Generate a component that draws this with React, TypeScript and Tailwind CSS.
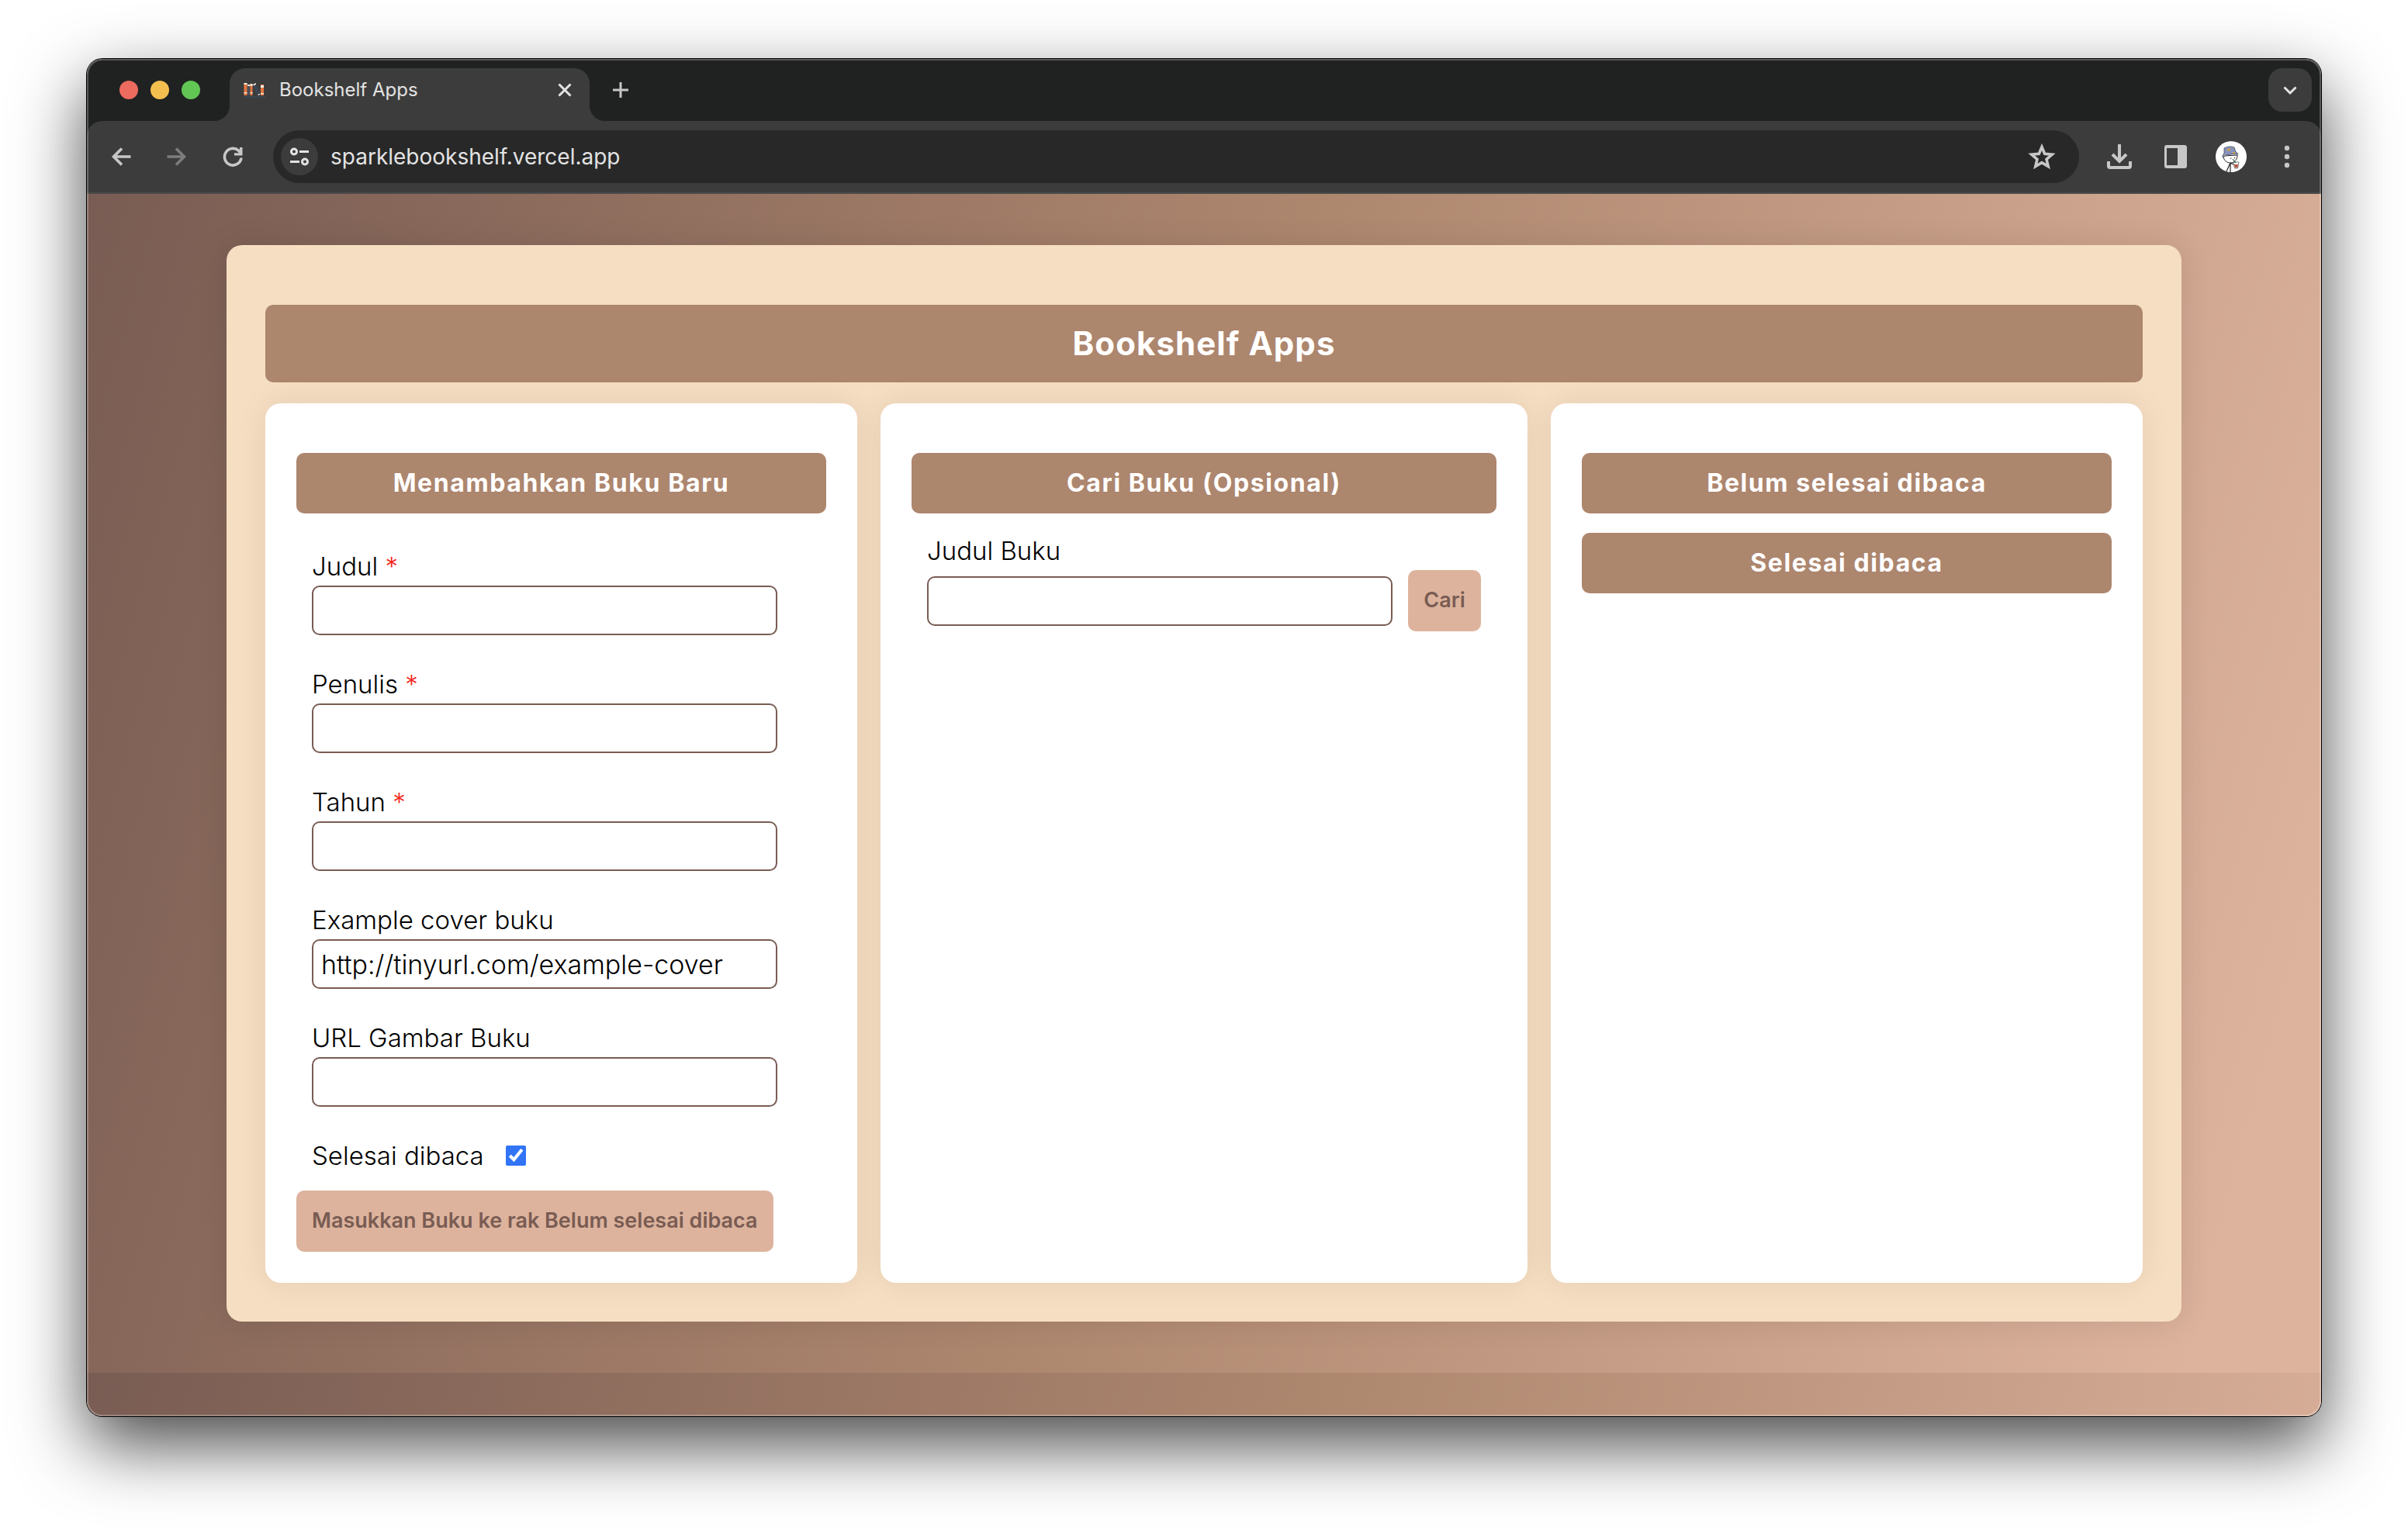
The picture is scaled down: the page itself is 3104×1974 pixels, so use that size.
import type { ReactNode } from "react";

function Heading({ children }: { children: ReactNode }) {
  return (
    <h2 className="flex h-[78px] items-center justify-center rounded-[10px] bg-[#ad866e] text-[32px] leading-[48px] font-bold tracking-wider text-white">
      {children}
    </h2>
  );
}

function Card({ children, className }: { children: ReactNode; className: string }) {
  return (
    <section className={`rounded-[20px] bg-white px-10 pt-16 pb-10 shadow-[0_0_40px_rgba(0,0,0,0.08)] ${className}`}>
      {children}
    </section>
  );
}

const inputClass =
  "block h-16 w-full max-w-[600px] rounded-[10px] border-2 border-[#795c53] bg-white px-[10px] text-[34px] leading-[48px] font-light text-black";

const labelClass = "text-[33px] leading-[46px] font-light";

function Field({ id, label, required, value }: { id: string; label: string; required?: boolean; value?: string }) {
  return (
    <div>
      <label htmlFor={id} className={`block pb-0.5 ${labelClass}`}>
        {label} {required && <span className="text-[#f5261b]">*</span>}
      </label>
      <input id={id} type="text" defaultValue={value} className={inputClass} />
    </div>
  );
}

const buttonClass = "h-[79px] rounded-[10px] bg-[#ddb39d] text-[27px] font-semibold text-[#795c53]";

function TabStrip() {
  return (
    <div className="flex h-20 items-center bg-[#202221] pr-3">
      <div className="flex w-[184px] shrink-0 gap-4 pl-[42px]">
        <span className="size-6 rounded-full bg-[#ed6a5f]" />
        <span className="size-6 rounded-full bg-[#f5bf4f]" />
        <span className="size-6 rounded-full bg-[#62c655]" />
      </div>
      <div className="relative flex h-[68px] w-[464px] items-center self-end rounded-t-[20px] bg-[#3c3c3c] pr-5 pb-3 pl-[18px]">
        <svg className="absolute bottom-0 -left-5 size-5" viewBox="0 0 20 20" fill="#3c3c3c">
          <path d="M20 0v20H0A20 20 0 0 0 20 0Z" />
        </svg>
        <svg className="absolute -right-5 bottom-0 size-5" viewBox="0 0 20 20" fill="#3c3c3c">
          <path d="M0 0v20h20A20 20 0 0 1 0 0Z" />
        </svg>
        <svg className="h-[22px] w-7" viewBox="0 0 28 22">
          <path fill="#e8763f" d="M.5 2h4v16h-4zM8.500 3h3v15h-3zM22 4h4v14h-4z" />
          <path fill="#4a4f5a" d="M5 6h3v12H5z" />
          <path fill="#f4ede4" d="M.5 2h4v2h-4zM5 4h3v2H5zM8.500 3h3v3h-3zM.5 14h4v1.500h-4zM8.500 14h3v1.500h-3zM22 5h4v3h-4zM22 15h4v1.500h-4zM12 4l4-2v2l-3 1.500zM18 16.500l3-1v1.500l-2 1z" />
          <path fill="#3b4657" d="M12.500 6l3.500-1.500 5 11-3 1.500zM0 19h28v2H0z" />
        </svg>
        <span className="ml-[18px] flex-1 text-[24px] leading-8 text-[#e3e3e3]">Bookshelf Apps</span>
        <button aria-label="Close tab" className="flex size-6 items-center justify-center">
          <svg className="size-6" viewBox="0 0 24 24" fill="none" stroke="#e3e3e3" strokeWidth="3">
            <path d="M4.500 4.500l15 15M19.500 4.500l-15 15" />
          </svg>
        </button>
      </div>
      <button aria-label="New tab" className="ml-7">
        <svg className="size-6" viewBox="0 0 24 24" fill="none" stroke="#c7c7c7" strokeWidth="3">
          <path d="M12 2v20M2 12h20" />
        </svg>
      </button>
      <button aria-label="Search tabs" className="ml-auto flex size-14 items-center justify-center rounded-[18px] bg-[#3c3c3c]">
        <svg className="size-6" viewBox="0 0 24 24" fill="none" stroke="#e3e3e3" strokeWidth="3">
          <path d="M4.500 8.500l7.500 7.500 7.500-7.500" />
        </svg>
      </button>
    </div>
  );
}

function Toolbar() {
  return (
    <div className="bg-[#202221]">
      <div className="flex h-[94px] items-center rounded-t-[20px] border-b-2 border-[#4a4a4a] bg-[#3c3c3c] pr-6 pl-7">
        <button aria-label="Back">
          <svg className="size-8" viewBox="0 0 32 32" fill="none" stroke="#c7c7c7" strokeWidth="3.600">
            <path d="M28.500 16H6.500M17 5.500L6.500 16 17 26.500" />
          </svg>
        </button>
        <button aria-label="Forward" className="ml-10">
          <svg className="size-8" viewBox="0 0 32 32" fill="none" stroke="#7c7c7c" strokeWidth="3.600">
            <path d="M3.500 16h22M15 5.500L25.500 16 15 26.500" />
          </svg>
        </button>
        <button aria-label="Reload" className="ml-10">
          <svg className="size-8" viewBox="0 0 32 32" fill="none" stroke="#c7c7c7" strokeWidth="3.600">
            <path d="M27 17.500A10.800 10.800 0 1 1 23.500 8.200L27 11.700" />
            <path fill="#c7c7c7" stroke="none" d="M28.500 4v10.500H18V11.200h7V4z" />
          </svg>
        </button>
        <div className="ml-9 flex h-[68px] flex-1 items-center rounded-full bg-[#282828] pr-[30px] pl-[10px]">
          <button aria-label="Site information" className="flex size-12 items-center justify-center rounded-full bg-[#3c3c3c]">
            <svg className="size-7" viewBox="0 0 28 28" fill="none" stroke="#e3e3e3" strokeWidth="3">
              <circle cx="7" cy="7.500" r="3.500" />
              <path d="M14 7.500h12M2 20.500h12" />
              <circle cx="21" cy="20.500" r="3.500" />
            </svg>
          </button>
          <input
            aria-label="Address"
            defaultValue="sparklebookshelf.vercel.app"
            className="ml-4 min-w-0 flex-1 bg-transparent text-[28px] leading-10 text-[#e3e3e3]"
          />
          <button aria-label="Bookmark this page">
            <svg className="size-9" viewBox="0 0 36 36" fill="none" stroke="#c7c7c7" strokeWidth="3.600">
              <path d="M18 5.500l3.700 8.800 9.500.8-7.200 6.200 2.200 9.300-8.200-4.900-8.200 4.900L12 21.300l-7.200-6.200 9.500-.8z" />
            </svg>
          </button>
        </div>
        <button aria-label="Downloads" className="ml-9">
          <svg className="size-8" viewBox="0 0 32 32" fill="none" stroke="#c7c7c7" strokeWidth="4">
            <path d="M16 0v21M7 13l9 9 9-9" />
            <path d="M2 22v6a2 2 0 0 0 2 2h24a2 2 0 0 0 2-2v-6" />
          </svg>
        </button>
        <button aria-label="Side panel" className="ml-10">
          <svg className="size-8" viewBox="0 0 32 32">
            <path fill="#c7c7c7" fillRule="evenodd" d="M5 1h23a3 3 0 0 1 3 3v24a3 3 0 0 1-3 3H5a3 3 0 0 1-3-3V4a3 3 0 0 1 3-3Zm0 4v22h14V5Z" />
          </svg>
        </button>
        <button aria-label="Profile" className="ml-9">
          <svg className="size-10" viewBox="0 0 40 40">
            <circle cx="20" cy="20" r="20" fill="#fff" />
            <path fill="#fff" stroke="#222" strokeWidth="1" d="M10 19c0 6 5 9 9 9s9-3 9-10z" />
            <path fill="#8492bd" stroke="#454b62" strokeWidth=".8" d="M11 9c4-2 9-3 13-1l2 6c2 1 3 2 3 3-7-1-14 0-20 4 0-2 0-4 2-5z" />
            <path fill="#c9a04a" d="M15 10l4-1v3l-4 1zM22 14h3v2h-3zM10 18l3-1-1 2zM21 8l2 1-1 1z" />
            <path fill="none" stroke="#222" strokeWidth="1.200" d="M19 28l-5 11M19 29v11M19 28l4 2" />
            <path fill="#fff" stroke="#555" strokeWidth=".8" d="M23 27h7l-1.500 8h-4z" />
            <path fill="#b5543f" d="M24 30h5l-.8 4h-3.400z" />
            <path stroke="#2f5f4a" strokeWidth="1.200" d="M22 23l4 5" />
            <path fill="#222" d="M19 21.500h1.200v1.200H19zM24 21h1.200v1.200H24z" />
          </svg>
        </button>
        <button aria-label="Menu" className="ml-8">
          <svg className="size-10" viewBox="0 0 40 40" fill="#c7c7c7">
            <circle cx="20" cy="9" r="3.200" />
            <circle cx="20" cy="20" r="3.200" />
            <circle cx="20" cy="31" r="3.200" />
          </svg>
        </button>
      </div>
    </div>
  );
}

export default function App() {
  return (
    <div className="flex min-h-screen flex-col bg-white px-28 pt-[76px] pb-[148px] font-[Inter,sans-serif] text-black">
      <div className="relative flex flex-1 flex-col rounded-[20px] shadow-[0_0_0_1px_#000,0_36px_90px_rgba(0,0,0,0.72)]">
        <div className="flex flex-1 flex-col overflow-hidden rounded-[20px]">
          <TabStrip />
          <Toolbar />
          <main className="flex-1 bg-[linear-gradient(105deg,#795c53,#ad866e_48%,#ddb39d_95%)] bg-[length:100%_1520px] px-[180px] pt-[66px]">
            <div className="rounded-[20px] bg-[#f6dec2] px-[50px] pt-[77px] pb-[50px] shadow-[0_0_40px_rgba(0,0,0,0.1)]">
              <h1 className="flex h-[100px] items-center justify-center rounded-[10px] bg-[#ad866e] text-[42px] leading-[60px] font-bold tracking-wide text-white">
                Bookshelf Apps
              </h1>
              <div className="mt-[27px] flex gap-[30px]">
                <Card className="min-w-0 flex-1">
                  <Heading>Menambahkan Buku Baru</Heading>
                  <form>
                    <div className="mt-[45px] flex flex-col gap-10 px-5">
                      <Field id="title" label="Judul" required />
                      <Field id="author" label="Penulis" required />
                      <Field id="year" label="Tahun" required />
                      <Field id="example" label="Example cover buku" value="http://tinyurl.com/example-cover" />
                      <Field id="cover" label="URL Gambar Buku" />
                      <div className="flex items-center gap-7 pb-0.5">
                        <label htmlFor="done" className={labelClass}>
                          Selesai dibaca
                        </label>
                        <input id="done" type="checkbox" defaultChecked className="size-[26px] accent-[#3174f6]" />
                      </div>
                    </div>
                    <button type="button" className={`mt-5 px-5 ${buttonClass}`}>
                      Masukkan Buku ke rak Belum selesai dibaca
                    </button>
                  </form>
                </Card>
                <Card className="w-[834px]">
                  <Heading>Cari Buku (Opsional)</Heading>
                  <form className="mt-[25px] px-5">
                    <label htmlFor="search" className={`block pb-0.5 ${labelClass}`}>
                      Judul Buku
                    </label>
                    <div className="flex items-center gap-5">
                      <input id="search" type="text" className={inputClass} />
                      <button type="button" className={`w-[94px] shrink-0 ${buttonClass}`}>
                        Cari
                      </button>
                    </div>
                  </form>
                </Card>
                <Card className="flex min-w-0 flex-1 flex-col gap-[25px]">
                  <Heading>Belum selesai dibaca</Heading>
                  <Heading>Selesai dibaca</Heading>
                </Card>
              </div>
            </div>
          </main>
        </div>
        <div className="pointer-events-none absolute inset-0 rounded-[20px] shadow-[inset_0_0_0_2px_rgba(255,255,255,0.25)]" />
      </div>
    </div>
  );
}
